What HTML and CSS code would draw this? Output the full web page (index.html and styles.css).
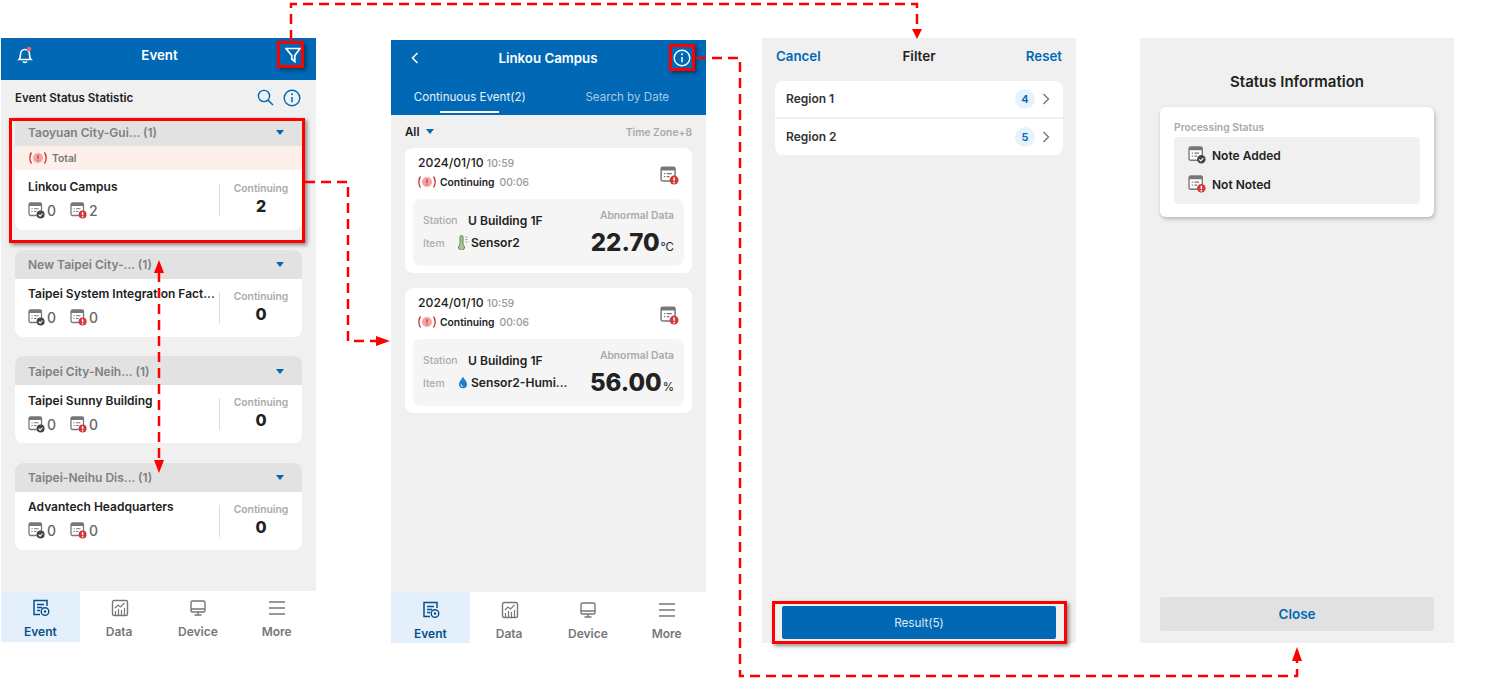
FILE: index.html
```html
<!DOCTYPE html>
<html lang="en">
<head>
  <meta charset="UTF-8">
  <meta name="viewport" content="width=device-width, initial-scale=1.0">
  <title>Event flow</title>
  <link rel="stylesheet" href="styles.css">
</head>
<body>
  <svg class="defs" width="0" height="0">
    <symbol id="note" viewBox="0 0 17 17">
      <rect x="1" y="1" width="12.5" height="12.5" rx="1.5" fill="#fff" stroke="#777" stroke-width="1.3"/>
      <rect x="1" y="1" width="12.5" height="3" fill="#777"/>
      <path d="M3.5 6.8h1.2M6 6.8h4.5M3.500 9.500h1.200M6 9.500h2.500" stroke="#777" stroke-width="1.1" fill="none"/>
    </symbol>
    <symbol id="note-ok" viewBox="0 0 17 17">
      <use href="#note"/>
      <circle cx="12.6" cy="12.6" r="4" fill="#444"/>
      <path d="M10.7 12.7l1.4 1.4 2.4-2.6" stroke="#fff" stroke-width="1.1" fill="none"/>
    </symbol>
    <symbol id="note-bad" viewBox="0 0 17 17">
      <use href="#note"/>
      <circle cx="12.6" cy="12.6" r="4" fill="#d13a3a"/>
      <path d="M12.6 10.2v3" stroke="#fff" stroke-width="1.4" fill="none"/>
      <circle cx="12.6" cy="14.8" r=".8" fill="#fff"/>
    </symbol>
    <symbol id="alarm" viewBox="0 0 18 14">
      <circle cx="9" cy="7" r="5" fill="#f3a3a3"/>
      <path d="M9 4.200v3.600M9 8.700v1.100" stroke="#c93434" stroke-width="1.300" fill="none"/>
      <path d="M2.500 1.500C.3 4.600.3 9.400 2.500 12.500M15.500 1.500c2.200 3.100 2.200 7.900 0 11" stroke="#c93434" stroke-width="1.300" fill="none"/>
    </symbol>
    <symbol id="info" viewBox="0 0 18 18">
      <circle cx="9" cy="9" r="7.8" fill="none" stroke="currentColor" stroke-width="1.4"/>
      <path d="M9 8v5.200" stroke="currentColor" stroke-width="1.500" fill="none"/>
      <circle cx="9" cy="5.300" r="1" fill="currentColor"/>
    </symbol>
    <symbol id="tab-event" viewBox="0 0 18 18">
      <path d="M15 7V1.500H2v14h6" fill="none" stroke="currentColor" stroke-width="1.500"/>
      <path d="M5 5.500h7M5 8.500h5M5 11.500h3" stroke="currentColor" stroke-width="1.300" fill="none"/>
      <circle cx="13" cy="12.500" r="3.800" fill="none" stroke="currentColor" stroke-width="1.400"/>
      <circle cx="13" cy="12.500" r="1.200" fill="currentColor"/>
    </symbol>
    <symbol id="tab-data" viewBox="0 0 18 18">
      <rect x="1.500" y="1.500" width="15" height="15" rx="1.500" fill="none" stroke="currentColor" stroke-width="1.400"/>
      <path d="M4 9l3-3 2.500 2 4-4" fill="none" stroke="currentColor" stroke-width="1.100"/>
      <path d="M4.500 16v-4M7.500 16v-6M10.500 16v-5M13.500 16v-7" stroke="currentColor" stroke-width="1.200" fill="none"/>
    </symbol>
    <symbol id="tab-device" viewBox="0 0 18 18">
      <rect x="2" y="2" width="14" height="11" rx="1.500" fill="none" stroke="currentColor" stroke-width="1.400"/>
      <path d="M2 10h14M9 13v3M5.500 16h7" stroke="currentColor" stroke-width="1.400" fill="none"/>
    </symbol>
    <symbol id="tab-more" viewBox="0 0 18 18">
      <path d="M1 3h16M1 9h16M1 15h16" stroke="currentColor" stroke-width="1.400" fill="none"/>
    </symbol>
    <symbol id="chevron" viewBox="0 0 8 12">
      <path d="M1.500 1l5 5-5 5" fill="none" stroke="currentColor" stroke-width="1.400"/>
    </symbol>
  </svg>

  <div class="canvas">

    <!-- screen 1: event list -->
    <section class="phone phone-list">
      <header class="bar">
        <svg class="bar-icon" width="18" height="18" viewBox="0 0 18 18">
          <path d="M3 13.500c1.300-1.300 1.500-2.500 1.500-5C4.500 5.500 6.500 3.500 9 3.500s4.500 2 4.500 5c0 2.500.2 3.700 1.500 5z" fill="none" stroke="#fff" stroke-width="1.600"/>
          <path d="M7 15.500c.5 1.100 3.500 1.100 4 0" fill="none" stroke="#fff" stroke-width="1.600"/>
          <circle cx="13" cy="3" r="2.300" fill="#f0616a"/>
        </svg>
        <h1 class="bar-title">Event</h1>
        <svg class="bar-icon" width="16" height="16" viewBox="0 0 16 16">
          <path d="M1 1.500h14L9.800 8.500v6L6.800 12V8.500z" fill="none" stroke="#fff" stroke-width="1.700"/>
        </svg>
      </header>
      <div class="list-head">
        <h2 class="list-title">Event Status Statistic</h2>
        <svg class="icon-blue" width="17" height="17" viewBox="0 0 17 17">
          <circle cx="7" cy="7" r="5.600" fill="none" stroke="currentColor" stroke-width="1.400"/>
          <path d="M11 11l5 5" stroke="currentColor" stroke-width="1.500"/>
        </svg>
        <svg class="icon-blue" width="18" height="18"><use href="#info"/></svg>
      </div>
      <div class="groups">
        <article class="group">
          <div class="group-head"><span>Taoyuan City-Gui... (1)</span><i class="caret"></i></div>
          <div class="group-total"><svg width="18" height="14"><use href="#alarm"/></svg>Total</div>
          <div class="group-body group-body-tall">
            <div class="site">
              <h3 class="site-name">Linkou Campus</h3>
              <div class="counts">
                <svg width="17" height="17"><use href="#note-ok"/></svg><b>0</b>
                <svg width="17" height="17"><use href="#note-bad"/></svg><b>2</b>
              </div>
            </div>
            <div class="cont"><small>Continuing</small><strong>2</strong></div>
          </div>
        </article>
        <article class="group">
          <div class="group-head"><span>New Taipei City-... (1)</span><i class="caret"></i></div>
          <div class="group-body">
            <div class="site">
              <h3 class="site-name">Taipei System Integration Fact...</h3>
              <div class="counts">
                <svg width="17" height="17"><use href="#note-ok"/></svg><b>0</b>
                <svg width="17" height="17"><use href="#note-bad"/></svg><b>0</b>
              </div>
            </div>
            <div class="cont"><small>Continuing</small><strong>0</strong></div>
          </div>
        </article>
        <article class="group">
          <div class="group-head"><span>Taipei City-Neih... (1)</span><i class="caret"></i></div>
          <div class="group-body">
            <div class="site">
              <h3 class="site-name">Taipei Sunny Building</h3>
              <div class="counts">
                <svg width="17" height="17"><use href="#note-ok"/></svg><b>0</b>
                <svg width="17" height="17"><use href="#note-bad"/></svg><b>0</b>
              </div>
            </div>
            <div class="cont"><small>Continuing</small><strong>0</strong></div>
          </div>
        </article>
        <article class="group">
          <div class="group-head"><span>Taipei-Neihu Dis... (1)</span><i class="caret"></i></div>
          <div class="group-body">
            <div class="site">
              <h3 class="site-name">Advantech Headquarters</h3>
              <div class="counts">
                <svg width="17" height="17"><use href="#note-ok"/></svg><b>0</b>
                <svg width="17" height="17"><use href="#note-bad"/></svg><b>0</b>
              </div>
            </div>
            <div class="cont"><small>Continuing</small><strong>0</strong></div>
          </div>
        </article>
      </div>
      <nav class="tabs">
        <a class="tab tab-on"><svg width="18" height="18"><use href="#tab-event"/></svg>Event</a>
        <a class="tab"><svg width="18" height="18"><use href="#tab-data"/></svg>Data</a>
        <a class="tab"><svg width="18" height="18"><use href="#tab-device"/></svg>Device</a>
        <a class="tab"><svg width="18" height="18"><use href="#tab-more"/></svg>More</a>
      </nav>
    </section>

    <!-- screen 2: campus detail -->
    <section class="phone phone-detail">
      <header class="detail-top">
        <div class="bar bar-detail">
          <svg class="bar-icon" width="8" height="12" viewBox="0 0 8 12"><path d="M6.500 1l-5 5 5 5" fill="none" stroke="#fff" stroke-width="1.500"/></svg>
          <h1 class="bar-title">Linkou Campus</h1>
          <svg class="bar-icon bar-info" width="18" height="18"><use href="#info"/></svg>
        </div>
        <div class="subtabs">
          <span class="subtab subtab-on">Continuous Event(2)</span>
          <span class="subtab">Search by Date</span>
        </div>
      </header>
      <div class="filter-row">
        <span class="all">All<i class="caret"></i></span>
        <span class="zone">Time Zone+8</span>
      </div>
      <div class="events">
        <article class="event">
          <div class="event-top">
            <div class="event-text">
              <div class="event-date">2024/01/10 <span>10:59</span></div>
              <div class="event-state"><svg width="18" height="14"><use href="#alarm"/></svg><b>Continuing</b> <span>00:06</span></div>
            </div>
            <svg class="event-note" width="19" height="19"><use href="#note-bad"/></svg>
          </div>
          <div class="reading">
            <dl class="reading-info">
              <div><dt>Station</dt><dd>U Building 1F</dd></div>
              <div><dt class="dt-item">Item</dt><dd>
                <svg width="10" height="15" viewBox="0 0 10 15"><path d="M3.500 1.500a1.500 1.500 0 0 1 3 0v7.700a3 3 0 1 1-3 0z" fill="#a9c49a" stroke="#5f8a50" transform="translate(-1.500 .5)"/><path d="M7.500 2h2M7.500 4.500h2M7.500 7h2" stroke="#999"/></svg>
                Sensor2</dd></div>
            </dl>
            <div class="abnormal">
              <small>Abnormal Data</small>
              <div class="value">22.70<span>°C</span></div>
            </div>
          </div>
        </article>
        <article class="event">
          <div class="event-top">
            <div class="event-text">
              <div class="event-date">2024/01/10 <span>10:59</span></div>
              <div class="event-state"><svg width="18" height="14"><use href="#alarm"/></svg><b>Continuing</b> <span>00:06</span></div>
            </div>
            <svg class="event-note" width="19" height="19"><use href="#note-bad"/></svg>
          </div>
          <div class="reading">
            <dl class="reading-info">
              <div><dt>Station</dt><dd>U Building 1F</dd></div>
              <div><dt class="dt-item">Item</dt><dd>
                <svg width="10" height="13" viewBox="0 0 10 13"><path d="M5 .8C3.500 3.500 1 5.500 1 8.300a4 4 0 0 0 8 0C9 5.500 6.500 3.500 5 .8z" fill="#1f7fc8"/><path d="M3 8.500a2 2 0 0 0 2 2" stroke="#fff" fill="none"/></svg>
                Sensor2-Humi...</dd></div>
            </dl>
            <div class="abnormal">
              <small>Abnormal Data</small>
              <div class="value">56.00<span>%</span></div>
            </div>
          </div>
        </article>
      </div>
      <nav class="tabs">
        <a class="tab tab-on"><svg width="18" height="18"><use href="#tab-event"/></svg>Event</a>
        <a class="tab"><svg width="18" height="18"><use href="#tab-data"/></svg>Data</a>
        <a class="tab"><svg width="18" height="18"><use href="#tab-device"/></svg>Device</a>
        <a class="tab"><svg width="18" height="18"><use href="#tab-more"/></svg>More</a>
      </nav>
    </section>

    <!-- screen 3: filter -->
    <section class="phone phone-filter">
      <header class="filter-bar">
        <a class="link">Cancel</a>
        <h1 class="filter-title">Filter</h1>
        <a class="link link-right">Reset</a>
      </header>
      <ul class="regions">
        <li class="region">Region 1<span class="badge">4</span><svg class="chev" width="8" height="12"><use href="#chevron"/></svg></li>
        <li class="region">Region 2<span class="badge">5</span><svg class="chev" width="8" height="12"><use href="#chevron"/></svg></li>
      </ul>
      <button type="button" class="result-btn">Result(5)</button>
    </section>

    <!-- screen 4: status info -->
    <section class="phone phone-status">
      <h1 class="status-title">Status Information</h1>
      <div class="status-card">
        <h2 class="status-label">Processing Status</h2>
        <div class="status-box">
          <div class="status-row"><svg width="18" height="18"><use href="#note-ok"/></svg>Note Added</div>
          <div class="status-row"><svg width="18" height="18"><use href="#note-bad"/></svg>Not Noted</div>
        </div>
      </div>
      <button type="button" class="close-btn">Close</button>
    </section>

    <!-- annotations over the screens -->
    <div class="mark mark-filter"></div>
    <div class="mark mark-group"></div>
    <div class="mark mark-info"></div>
    <div class="mark mark-result"></div>
    <svg class="arrows" width="1512" height="680" viewBox="0 0 1512 680">
      <g fill="none" stroke="#f00" stroke-width="2.500" stroke-dasharray="10 6">
        <path d="M291 40V4H917V30"/>
        <path d="M305 182H348V341H378"/>
        <path d="M159 272V462"/>
        <path d="M696 58H740V676H1297V658"/>
      </g>
      <g fill="#f00">
        <path d="M912 29h10l-5 10z"/>
        <path d="M376 336v10l14-5z"/>
        <path d="M154 273h10l-5-13z"/>
        <path d="M154 460h10l-5 13z"/>
        <path d="M1292 661h10l-5-14z"/>
      </g>
    </svg>
  </div>
</body>
</html>
```

FILE: styles.css
```css
* {
  box-sizing: border-box;
}

body {
  margin: 0;
  background-color: white;
  color: #222;
  font-family: Inter, "Noto Sans", sans-serif;
}

h1, h2, h3, ul, dl, dd {
  margin: 0;
  padding: 0;
}

.defs {
  position: absolute;
}

.canvas {
  position: relative;
  width: 1512px;
  height: 680px;
  overflow: hidden;
}

/* the four screens sit on a free canvas */
.phone {
  position: absolute;
  display: flex;
  flex-direction: column;
  background-color: #f0f0f0;
}

.phone-list { left: 1px; top: 38px; width: 315px; height: 604px; }
.phone-detail { left: 391px; top: 40px; width: 315px; height: 603px; }
.phone-filter { left: 762px; top: 38px; width: 314px; height: 605px; }
.phone-status { left: 1140px; top: 38px; width: 314px; height: 605px; }

.bar {
  display: flex;
  align-items: center;
  justify-content: space-between;
  height: 42px;
  padding: 0 15px 8px 15px;
  background-color: #0068b5;
  color: white;
}

.bar-icon {
  flex: none;
}

.bar-title {
  font-size: 13.300px;
  font-weight: 600;
  color: white;
}

.list-head {
  display: flex;
  align-items: center;
  gap: 9px;
  height: 37px;
  padding: 0 15px 2px 14px;
}

.list-title {
  flex: 1;
  font-size: 11.500px;
  font-weight: 600;
}

.icon-blue {
  color: #0068b5;
}

.groups {
  display: flex;
  flex-direction: column;
  gap: 19.500px;
  padding: 0 14px;
  flex: 1;
}

.group {
  background-color: white;
  border-radius: 8px;
  overflow: hidden;
}

.group-head {
  display: flex;
  align-items: center;
  justify-content: space-between;
  height: 29px;
  padding: 1px 18px 0 13px;
  background-color: #e2e2e2;
  color: #808080;
  font-size: 12px;
  font-weight: 600;
}

.caret {
  display: inline-block;
  width: 0;
  height: 0;
  border-left: 4px solid transparent;
  border-right: 4px solid transparent;
  border-top: 5px solid #0068b5;
}

.group-total {
  display: flex;
  align-items: center;
  gap: 5px;
  height: 24px;
  padding-left: 14px;
  background-color: #fdf0ea;
  color: #777;
  font-size: 10.300px;
  font-weight: 600;
}

.group-body {
  display: flex;
  align-items: center;
  height: 58px;
  padding: 0 0 0 13px;
}

.group-body-tall {
  height: 60px;
}

.site {
  flex: 1;
  min-width: 0;
  margin-top: -3px;
}

.site-name {
  margin-bottom: 8px;
  font-size: 12px;
  font-weight: 600;
  white-space: nowrap;
}

.counts {
  display: flex;
  align-items: center;
  color: #666;
  font-size: 14px;
}

.counts b {
  width: 25px;
  padding-left: 2px;
  font-weight: 500;
}

.cont {
  display: flex;
  flex-direction: column;
  align-items: center;
  flex: none;
  width: 83px;
  border-left: 1px solid #ddd;
}

.cont small {
  margin-top: -2px;
  color: #aaa;
  font-size: 10.300px;
  font-weight: 600;
}

.cont strong {
  margin-top: 2px;
  font-size: 16px;
  font-weight: 800;
  line-height: 20px;
}

.tabs {
  display: flex;
  height: 51px;
  background-color: white;
}

.tab {
  display: flex;
  flex: 1;
  flex-direction: column;
  align-items: center;
  justify-content: flex-end;
  gap: 7px;
  padding-bottom: 3px;
  color: #777;
  font-size: 12px;
  font-weight: 600;
}

.tab svg {
  margin-left: 1px;
}

.tab-on {
  background-color: #e3f0fc;
  color: #0a4f86;
}

.phone-detail .tab {
  padding-bottom: 2px;
}

/* detail */
.detail-top {
  height: 75px;
  background-color: #0068b5;
}

.bar-detail {
  height: 36px;
  padding: 0 15px 0 20px;
}

.bar-detail .bar-title {
  margin-left: 4px;
}

.subtabs {
  display: flex;
  height: 39px;
  padding-top: 14px;
}

.subtab {
  flex: 1;
  text-align: center;
  color: #a9c9e4;
  font-size: 11.600px;
}

.subtab-on {
  position: relative;
  color: #e8f2fa;
}

.subtab-on::after {
  content: "";
  position: absolute;
  left: 49px;
  bottom: 2px;
  width: 59px;
  height: 2px;
  background-color: white;
}

.filter-row {
  display: flex;
  align-items: center;
  justify-content: space-between;
  height: 33px;
  padding: 0 14px;
}

.all {
  display: flex;
  align-items: center;
  gap: 7px;
  font-size: 11.500px;
  font-weight: 600;
}

.zone {
  color: #aaa;
  font-size: 10.300px;
  font-weight: 600;
}

.events {
  display: flex;
  flex-direction: column;
  flex: 1;
  gap: 15px;
  padding: 0 14px;
}

.event {
  height: 125px;
  padding: 8px;
  background-color: white;
  border-radius: 8px;
}

.event-top {
  display: flex;
  align-items: center;
  justify-content: space-between;
  height: 43px;
  padding: 0 5px 0 5px;
}

.event-text {
  margin-bottom: 12px;
}

.event-note {
  margin-bottom: 4px;
}

.event-date {
  font-size: 12.200px;
  font-weight: 500;
  margin-bottom: 5px;
}

.event-date span {
  color: #999;
  font-size: 10.500px;
}

.event-state {
  display: flex;
  align-items: center;
  gap: 4px;
  font-size: 10.300px;
}

.event-state b {
  font-weight: 600;
}

.event-state span {
  margin-left: 1px;
  color: #999;
  font-weight: 500;
}

.reading {
  display: flex;
  justify-content: space-between;
  height: 67px;
  padding: 10px 10px 0 10px;
  background-color: #f5f5f5;
  border-radius: 8px;
}

.reading-info div {
  display: flex;
  align-items: center;
  height: 22.500px;
}

.reading-info dt {
  width: 45px;
  color: #aaa;
  font-size: 10.300px;
  font-weight: 500;
}

.reading-info .dt-item {
  width: 35px;
}

.reading-info dd {
  display: flex;
  align-items: center;
  gap: 3px;
  font-size: 12.100px;
  font-weight: 600;
}

.abnormal {
  display: flex;
  flex-direction: column;
  align-items: flex-end;
}

.abnormal small {
  color: #aaa;
  font-size: 10.300px;
  font-weight: 600;
}

.value {
  margin-top: 8px;
  font-size: 24px;
  font-weight: 800;
  line-height: 28px;
}

.value span {
  margin-left: 1px;
  font-size: 11.500px;
  font-weight: 400;
}

/* filter */
.filter-bar {
  display: flex;
  align-items: center;
  justify-content: space-between;
  height: 36px;
  padding: 0 14px;
  margin-bottom: 7px;
}

.link {
  flex: 1;
  color: #0068b5;
  font-size: 13.300px;
  font-weight: 600;
}

.link-right {
  text-align: right;
}

.filter-title {
  font-size: 13.500px;
  font-weight: 600;
}

.regions {
  display: flex;
  flex-direction: column;
  gap: 2px;
  margin: 0 13px;
  list-style: none;
  border-radius: 8px;
  overflow: hidden;
}

.region {
  display: flex;
  align-items: center;
  height: 36px;
  padding: 0 13px 1px 11px;
  background-color: white;
  font-size: 12px;
  font-weight: 600;
  color: #333;
}

.badge {
  display: flex;
  align-items: center;
  justify-content: center;
  width: 20px;
  height: 20px;
  margin-left: auto;
  margin-right: 7px;
  border-radius: 50%;
  background-color: #e6f2fc;
  color: #0068b5;
  font-size: 11px;
}

.chev {
  color: #777;
}

.result-btn {
  margin: auto 20px 4px;
  height: 33px;
  border: 0;
  border-radius: 2px;
  background-color: #0068b5;
  color: #dbe9f5;
  font-family: inherit;
  font-size: 11.700px;
}

/* status */
.status-title {
  margin-top: 34px;
  text-align: center;
  font-size: 15px;
  font-weight: 600;
}

.status-card {
  margin: 16px 20px 0;
  height: 110px;
  padding: 14px 14px 0;
  background-color: white;
  border-radius: 6px;
  box-shadow: 1px 2px 4px rgba(0, 0, 0, 0.25);
}

.status-label {
  margin-bottom: 4px;
  color: #aaa;
  font-size: 10.300px;
  font-weight: 600;
}

.status-box {
  display: flex;
  flex-direction: column;
  justify-content: center;
  gap: 11px;
  height: 67px;
  padding: 0 0 2px 14px;
  background-color: #f0f0f0;
  border-radius: 4px;
}

.status-row {
  display: flex;
  align-items: center;
  gap: 6px;
  font-size: 12px;
  font-weight: 600;
}

.close-btn {
  margin: auto 20px 12px;
  height: 34px;
  border: 0;
  border-radius: 3px;
  background-color: #e1e1e1;
  color: #0068b5;
  font-family: inherit;
  font-size: 13.500px;
  font-weight: 600;
}

/* red annotations */
.mark {
  position: absolute;
  border: 3.500px solid #f00;
  box-shadow: 2px 2px 4px rgba(0, 0, 0, 0.45);
}

.mark-filter { left: 277px; top: 41px; width: 27px; height: 27px; }
.mark-group { left: 9px; top: 118px; width: 296px; height: 125px; }
.mark-info { left: 669px; top: 44px; width: 26px; height: 27px; }
.mark-result { left: 772px; top: 601px; width: 295px; height: 43px; }

.arrows {
  position: absolute;
  left: 0;
  top: 0;
  pointer-events: none;
}
```
